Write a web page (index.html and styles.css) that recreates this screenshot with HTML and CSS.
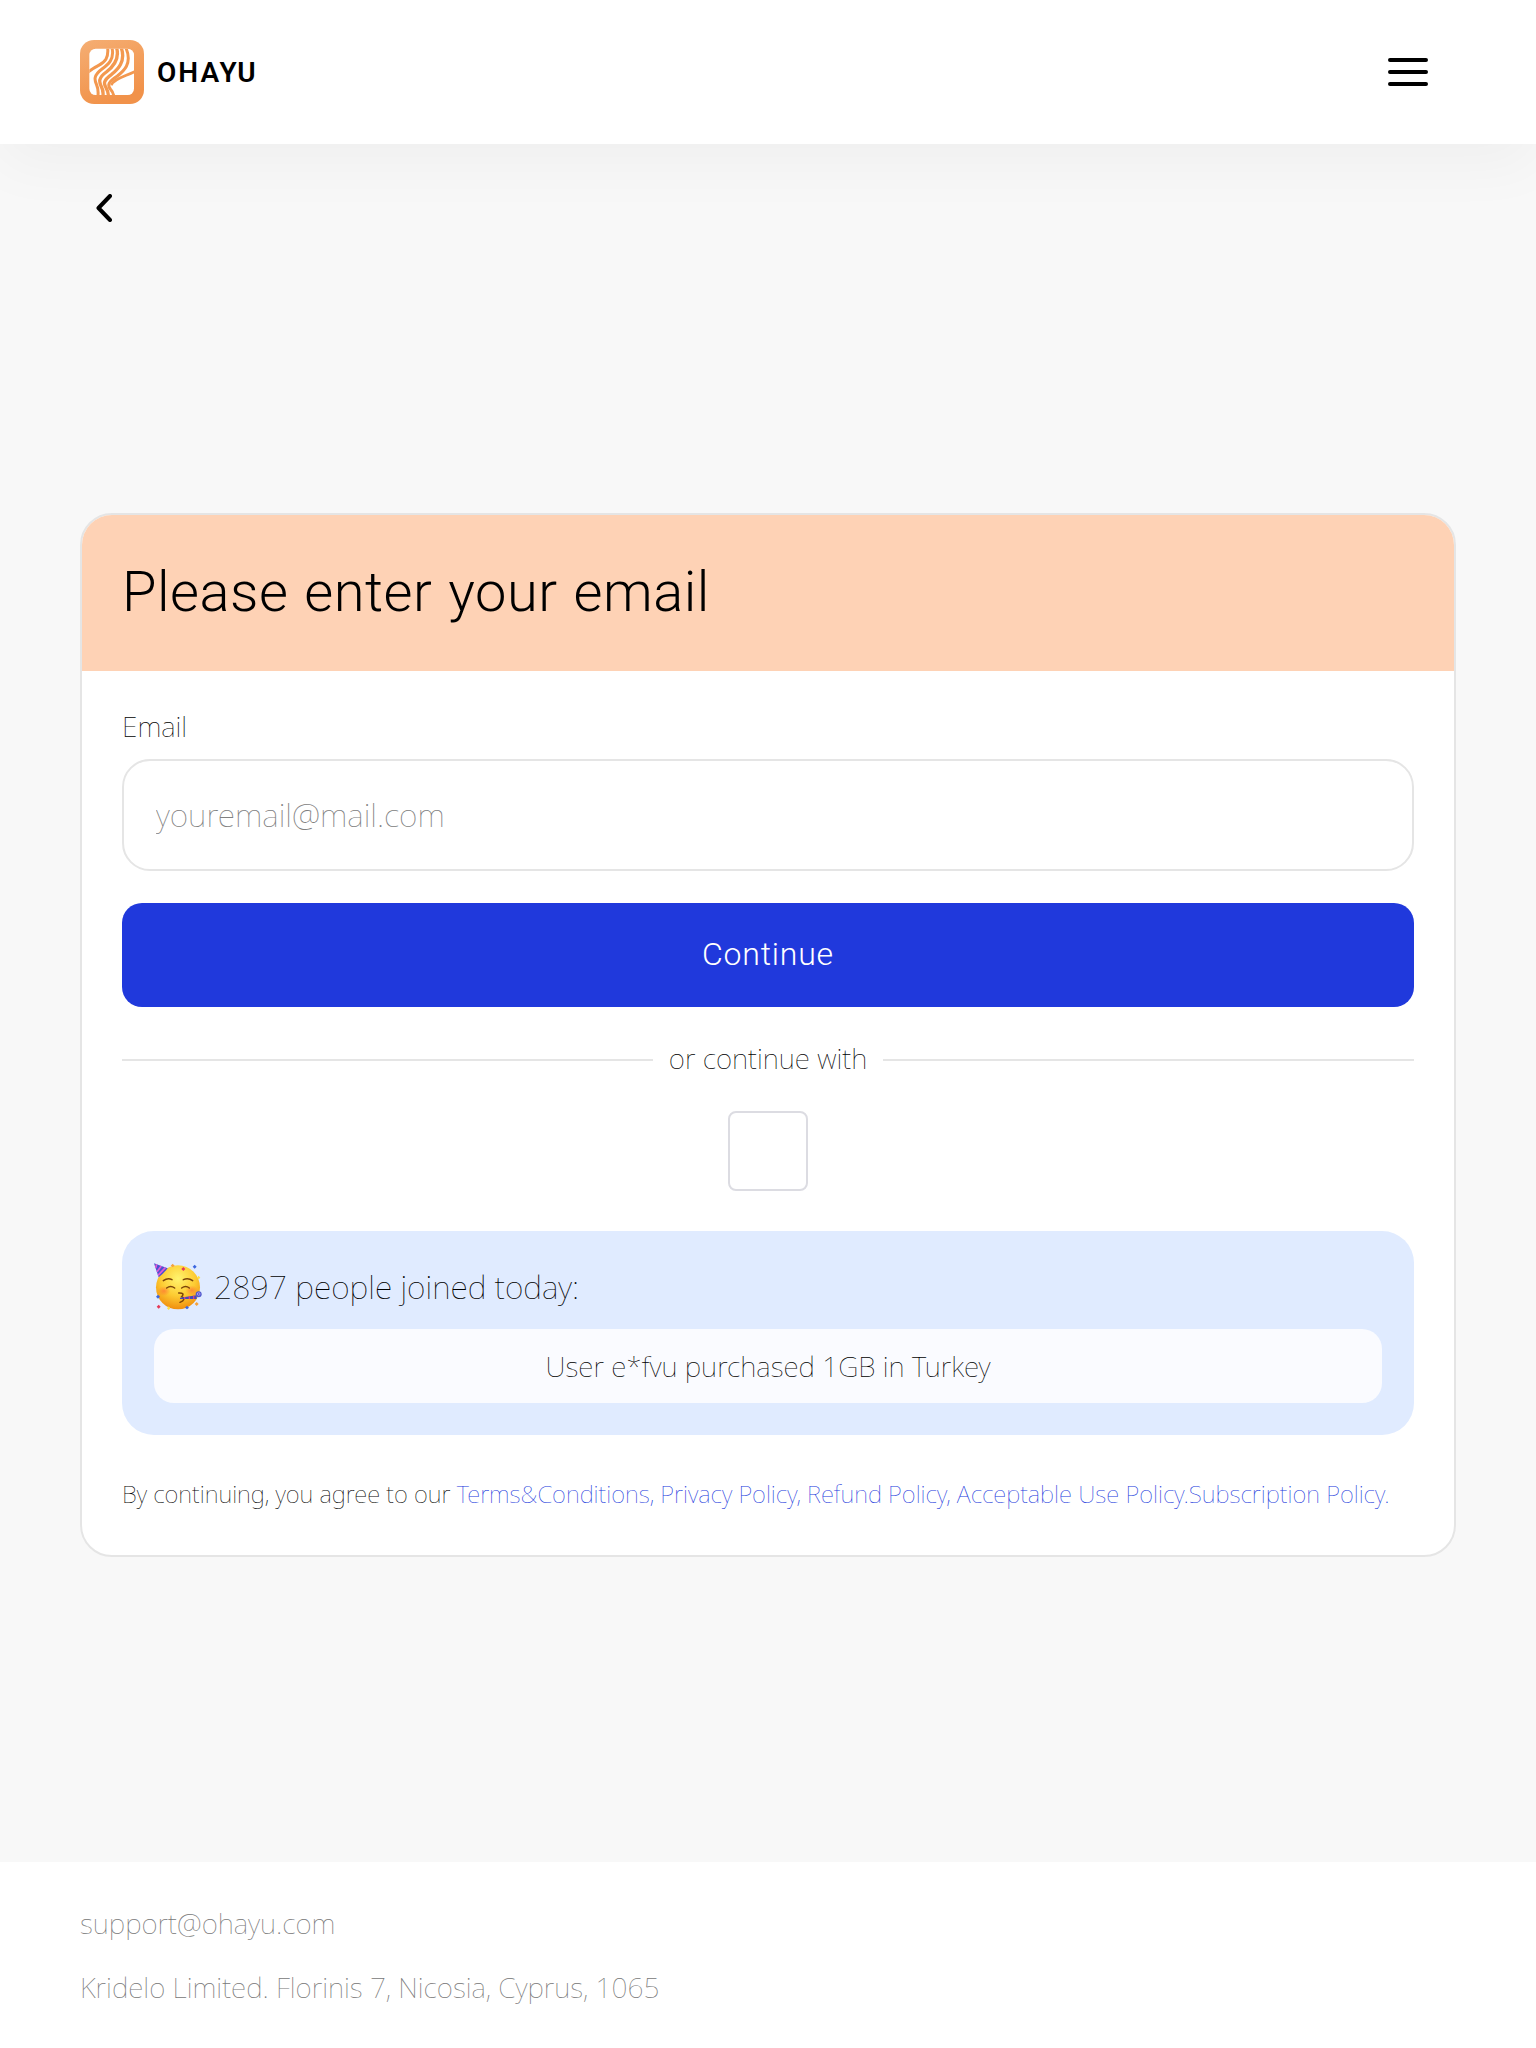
FILE: index.html
```html
<!DOCTYPE html>
<html lang="en">
<head>
<meta charset="utf-8">
<title>Ohayu</title>
<link rel="stylesheet" href="styles.css">
</head>
<body>
<header class="header">
  <a class="brand">
    <svg class="brand-mark" viewBox="30 30 192 192">
      <defs>
        <linearGradient id="mark" x1="0" y1="0" x2="0.4" y2="1"><stop offset="0" stop-color="#f5ae73"/><stop offset="1" stop-color="#f1924a"/></linearGradient>
        <clipPath id="window"><rect x="58" y="56" width="134" height="139" rx="19"/></clipPath>
      </defs>
      <rect x="30" y="30" width="192" height="192" rx="42" fill="url(#mark)"/>
      <rect x="58" y="56" width="134" height="139" rx="19" fill="#fff"/>
      <g clip-path="url(#window)" fill="none" stroke="#f3984f" stroke-width="9">
        <path d="M113 54C116 84 105 96 86 106C72 113 62 120 54 126"/>
        <path d="M126 54C134 88 114 104 96 117C70 136 73 150 80 165C85 176 85 186 84 197"/>
        <path stroke-width="10" d="M140 54C150 90 127 112 109 126C84 144 87 156 94 170C99 179 100 187 99 197"/>
        <path stroke-width="10" d="M154 54C168 95 143 118 125 133C98 152 101 163 109 175C113 182 115 189 115 197"/>
        <path stroke-width="9" d="M168 54C188 102 160 124 142 138C114 156 112 166 121 177C128 185 130 189 131 197"/>
        <path stroke-width="8" d="M196 124C166 139 126 148 125 166"/>
      </g>
    </svg>
    <span class="brand-name">OHAYU</span>
  </a>
  <svg class="menu" viewBox="0 0 40 28"><path d="M2 2H38M2 14H38M2 26H38" fill="none" stroke="#000" stroke-width="4" stroke-linecap="round"/></svg>
</header>
<main class="main">
  <svg class="back" viewBox="0 0 16 28"><path d="M14 2L2.5 14L14 26" fill="none" stroke="#000" stroke-width="4" stroke-linecap="round" stroke-linejoin="round"/></svg>
  <section class="card">
    <h1 class="card-title"><span>Please enter your email</span></h1>
    <div class="card-body">
      <label class="label" for="email">Email</label>
      <input class="input" id="email" type="email" placeholder="youremail@mail.com">
      <button class="continue">Continue</button>
      <div class="divider"><span class="divider-text">or continue with</span></div>
      <div class="social"></div>
      <div class="joined">
        <div class="joined-title">
          <svg class="party" viewBox="0 0 144 144">
            <defs>
              <radialGradient id="face" cx=".5" cy=".3" r=".72"><stop offset="0" stop-color="#fff46e"/><stop offset=".55" stop-color="#fdcb32"/><stop offset="1" stop-color="#ef8a0c"/></radialGradient>
              <radialGradient id="blush"><stop offset="0" stop-color="#ff6b35" stop-opacity=".65"/><stop offset="1" stop-color="#ff6b35" stop-opacity="0"/></radialGradient>
            </defs>
            <circle cx="72" cy="73" r="66" fill="url(#face)"/>
            <ellipse cx="30" cy="84" rx="19" ry="15" fill="url(#blush)"/><ellipse cx="113" cy="82" rx="19" ry="15" fill="url(#blush)"/>
            <path d="M0 1L41 16Q28 32 14 43Z" fill="#4b51cf"/>
            <path d="M8 4L5 15M22 9L9 26M34 14L12 37" stroke="#e05bd8" stroke-width="5"/>
            <g fill="none" stroke="#7b4409" stroke-width="4.5" stroke-linecap="round">
              <path d="M28 53Q41 44 54 50M88 50Q103 44 116 53"/>
              <path d="M38 75Q50 66 62 75M83 75Q95 66 106 75"/>
              <path d="M74 90Q94 89 83 101Q98 109 78 118"/>
            </g>
            <path d="M78 104L128 97V108L78 108Z" fill="#444bb8"/><path d="M92 102V108M106 100V108M119 98V108" stroke="#de3e83" stroke-width="4"/>
            <circle cx="134" cy="94" r="9" fill="#515bcc"/><circle cx="134" cy="93" r="4" fill="none" stroke="#ad91ee" stroke-width="3"/>
            <path d="M122 5l6 6-6 6-6-6zM12 95l6 6-6 6-6-6zM99 128l6 6-6 5-6-5z" fill="#3c66df"/>
            <path d="M88 12l6 6-6 6-6-6zM14 125l6 6-6 6-6-6z" fill="#e53958"/>
            <path d="M56 2l6 6-6 5-6-5zM128 117l6 6-6 6-6-6z" fill="#f5a23c"/>
            <path d="M134 38l5 6-5 5-5-5zM44 130l5 6-5 5-5-5z" fill="#ffdf44"/>
          </svg>
          <span>2897 people joined today:</span>
        </div>
        <div class="joined-item">User e*fvu purchased 1GB in Turkey</div>
      </div>
      <p class="terms">By continuing, you agree to our <a>Terms&amp;Conditions, </a><a>Privacy Policy, </a><a>Refund Policy, </a><a>Acceptable Use Policy.</a><a>Subscription Policy.</a></p>
    </div>
  </section>
</main>
<footer class="footer">
  <span>support@ohayu.com</span>
  <span>Kridelo Limited. Florinis 7, Nicosia, Cyprus, 1065</span>
</footer>
</body>
</html>
```
FILE: styles.css
```css
* { box-sizing: border-box; }
body {
  margin: 0;
  height: 2048px;
  overflow: hidden;
  display: flex;
  flex-direction: column;
  background: #f8f8f8;
  color: #000;
  font-family: "Noto Sans", sans-serif;
  font-weight: 100;
  font-size: 28px;
  line-height: 40px;
}
.header {
  height: 144px;
  flex: none;
  padding: 0 108px 0 80px;
  display: flex;
  align-items: center;
  justify-content: space-between;
  background: #fff;
  box-shadow: 0 20px 60px rgba(0, 0, 0, .04);
}
.brand { display: flex; align-items: center; gap: 13px; }
.brand-mark { width: 64px; height: 64px; }
.brand-name { font: 600 28px/40px Roboto, sans-serif; letter-spacing: 2px; padding-top: 2px; }
.menu { width: 40px; height: 28px; }
.main { flex: 1; padding: 50px 80px 0; }
.back { display: block; width: 16px; height: 28px; margin-left: 16px; }
.card {
  margin-top: 291px;
  height: 1044px;
  border: 2px solid #e5e5e5;
  border-radius: 32px;
  background: #fff;
  overflow: hidden;
}
.card-title {
  margin: 0;
  height: 156px;
  padding: 0 40px 2px;
  display: flex;
  align-items: center;
  background: #fed2b5;
  font: 300 56px/72px Roboto, sans-serif;
  letter-spacing: .5px;
  word-spacing: 1.8px;
}
.card-body { padding: 35px 40px 0; display: flex; flex-direction: column; }
.label { height: 40px; margin-bottom: 13px; }
.input {
  height: 112px;
  border: 2px solid #e5e5e5;
  border-radius: 28px;
  padding: 0 32px 2px;
  background: #fff;
  font: inherit;
  font-size: 32px;
}
.input::placeholder { color: #808080; }
.continue {
  height: 104px;
  margin-top: 32px;
  padding: 0 0 2px;
  border: 0;
  border-radius: 20px;
  background: #2039dc;
  color: #fff;
  font: 300 32px/40px Roboto, sans-serif;
  letter-spacing: .8px;
}
.divider { height: 40px; margin-top: 33px; display: flex; align-items: center; gap: 16px; }
.divider::before, .divider::after { content: ""; flex: 1; height: 2px; background: #e5e5e5; }
.divider-text { padding-bottom: 5px; }
.social { width: 80px; height: 80px; margin: 31px auto 0; border: 2px solid #dcdce2; border-radius: 8px; }
.joined { height: 204px; margin-top: 40px; padding: 32px; border-radius: 32px; background: #e0ebff; }
.joined-title { height: 48px; display: flex; align-items: center; gap: 12px; font-size: 32px; }
.party { width: 48px; height: 48px; }
.joined-item {
  height: 74px;
  margin-top: 18px;
  border-radius: 20px;
  background: #fafbff;
  display: flex;
  align-items: center;
  justify-content: center;
}
.terms { margin: 39px 0 0; font-size: 24px; letter-spacing: -.01px; white-space: nowrap; }
.terms a { color: #2039dc; }
.footer {
  flex: none;
  height: 186px;
  padding: 41px 80px 0;
  display: flex;
  flex-direction: column;
  gap: 24px;
  background: #fff;
  color: #777;
}
```
